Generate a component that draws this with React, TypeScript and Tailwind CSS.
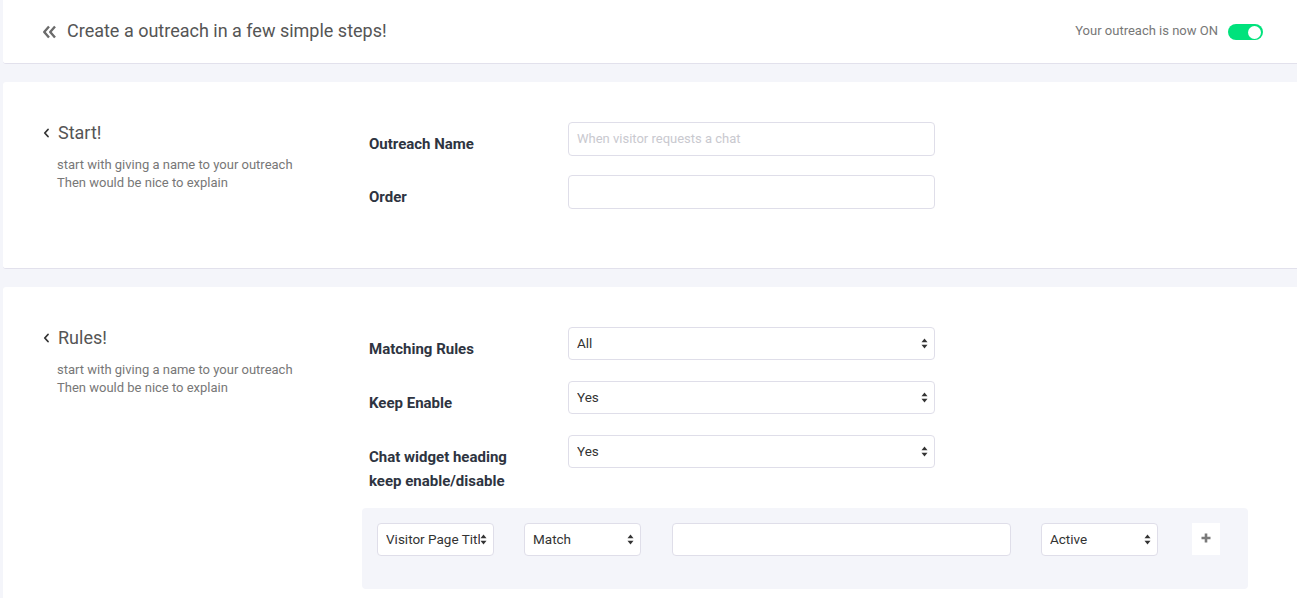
import React from "react";

const Arrows = () => (
  <svg width="7" height="11" viewBox="0 0 7 11" className="shrink-0">
    <path d="M3.5 0.5 L6.5 4.2 L0.5 4.2 Z" fill="#333" />
    <path d="M3.5 10.5 L6.5 6.8 L0.5 6.8 Z" fill="#333" />
  </svg>
);

const Select = ({ value, className }: { value: string; className: string }) => (
  <div
    className={`flex items-start border border-[#dfdee9] rounded-[4px] bg-white pl-[8px] pr-[6px] ${className}`}
  >
    <span className="flex-1 overflow-hidden whitespace-nowrap text-[13.5px] leading-[16px] text-[#333] pt-[7px]">
      {value}
    </span>
    <div className="self-center">
      <Arrows />
    </div>
  </div>
);

const Chevron = () => (
  <svg width="7" height="10" viewBox="0 0 7 10" className="shrink-0">
    <path d="M5 1.5 L1.8 5 L5 8.5" stroke="#333" strokeWidth="1.8" fill="none" strokeLinecap="round" strokeLinejoin="round" />
  </svg>
);

const SectionLeft = ({ title }: { title: string }) => (
  <div className="w-[359px] shrink-0 pl-[40px]">
    <div className="flex items-center h-[24px] mt-[-1px]">
      <Chevron />
      <span className="ml-[8px] text-[18px] text-[#555] leading-[24px]">{title}</span>
    </div>
    <div className="ml-[14px] mt-[11px] text-[13px] leading-[18px] text-[#777]">
      <div>start with giving a name to your outreach</div>
      <div>Then would be nice to explain</div>
    </div>
  </div>
);

const Label = ({ children }: { children: React.ReactNode }) => (
  <div className="w-[206px] shrink-0 pl-[7px] pt-[10px] text-[15px] leading-[24px] font-bold text-[#2e3441]">
    {children}
  </div>
);

export default function App() {
  return (
    <div
      className="min-h-screen bg-[#f4f5fa] pl-[3px]"
      style={{ fontFamily: "Roboto, 'Liberation Sans', sans-serif" }}
    >
      {/* Header */}
      <div className="h-[64px] bg-white border-b border-[#e2e1ec] rounded-bl-[3px] flex items-center pl-[39px] pr-[34px]">
        <svg width="15" height="14" viewBox="0 0 15 14" className="shrink-0">
          <path d="M7 1.5 L2.2 7 L7 12.5" stroke="#6b6b6b" strokeWidth="2.4" fill="none" strokeLinejoin="round" />
          <path d="M13 1.5 L8.2 7 L13 12.5" stroke="#6b6b6b" strokeWidth="2.4" fill="none" strokeLinejoin="round" />
        </svg>
        <span className="ml-[10px] text-[18px] text-[#555] leading-[24px] mt-[-2px]">
          Create a outreach in a few simple steps!
        </span>
        <div className="ml-auto flex items-center">
          <span className="text-[13px] text-[#777] mt-[-1px]">Your outreach is now ON</span>
          <div className="ml-[10px] w-[35px] h-[16px] rounded-full bg-[#00e27c] flex items-center justify-end pr-[2px] mt-[1px]">
            <div className="w-[13px] h-[13px] rounded-full bg-white" />
          </div>
        </div>
      </div>

      {/* Section 1 */}
      <div className="mt-[18px] bg-white border-b border-[#e2e1ec] rounded-l-[3px] flex pt-[40px] pb-[40px]">
        <SectionLeft title="Start!" />
        <div>
          <div className="flex mb-[19px]">
            <Label>Outreach Name</Label>
            <div className="w-[367px] h-[34px] border border-[#dfdee9] rounded-[4px] flex items-center pl-[8px] text-[13px] text-[#c9c9cf]">
              When visitor requests a chat
            </div>
          </div>
          <div className="flex mb-[19px]">
            <Label>Order</Label>
            <div className="w-[367px] h-[34px] border border-[#dfdee9] rounded-[4px]" />
          </div>
        </div>
      </div>

      {/* Section 2 */}
      <div className="mt-[18px] bg-white rounded-l-[3px] flex pt-[40px] pb-[20px]">
        <SectionLeft title="Rules!" />
        <div>
          <div className="flex mb-[20px]">
            <Label>Matching Rules</Label>
            <Select value="All" className="w-[367px] h-[33px]" />
          </div>
          <div className="flex mb-[20px]">
            <Label>Keep Enable</Label>
            <Select value="Yes" className="w-[367px] h-[33px]" />
          </div>
          <div className="flex mb-[15px]">
            <Label>
              Chat widget heading
              <br />
              keep enable/disable
            </Label>
            <Select value="Yes" className="w-[367px] h-[33px]" />
          </div>
          <div className="w-[886px] bg-[#f4f5fa] rounded-[4px] pt-[15px] pb-[33px] pl-[15px] flex items-start">
            <Select value="Visitor Page Title" className="w-[117px] h-[33px]" />
            <Select value="Match" className="w-[117px] h-[33px] ml-[30px]" />
            <div className="w-[339px] h-[33px] ml-[31px] border border-[#dfdee9] rounded-[4px] bg-white" />
            <Select value="Active" className="w-[117px] h-[33px] ml-[30px]" />
            <div className="ml-[34px] w-[28px] h-[32px] bg-white flex items-start justify-center pt-[10px]">
              <svg width="10" height="10" viewBox="0 0 10 10">
                <path d="M5 0.5 V9.5 M0.5 5 H9.5" stroke="#7a7a7a" strokeWidth="2.6" />
              </svg>
            </div>
          </div>
        </div>
      </div>
    </div>
  );
}
